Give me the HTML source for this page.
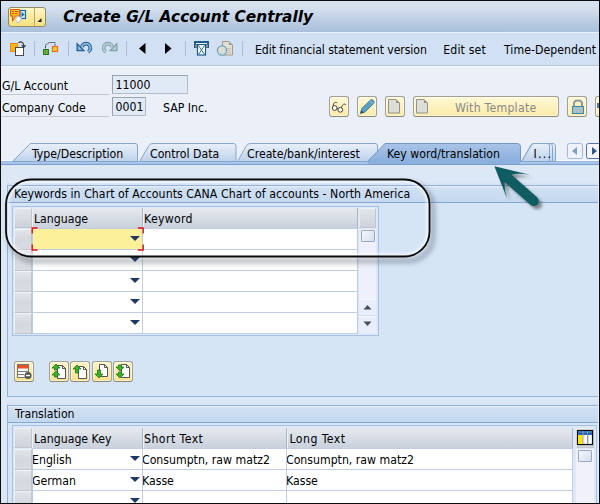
<!DOCTYPE html>
<html><head><meta charset="utf-8">
<title>Create G/L Account Centrally</title>
<style>
*{box-sizing:border-box;margin:0;padding:0}
html,body{width:600px;height:504px;overflow:hidden;background:#ebf0f8}
body{position:relative;font-family:"DejaVu Sans Condensed","DejaVu Sans","Liberation Sans",sans-serif;font-size:12.2px;font-stretch:condensed;color:#000}
.abs{position:absolute}
.t{position:absolute;white-space:nowrap;line-height:14px}
#titlebar{left:0;top:0;width:600px;height:32px;background:linear-gradient(#dae4f1 0,#d2deed 30%,#bccde3 65%,#a9c0dc 100%)}
#title{left:63.300px;top:5.500px;font:italic bold 15.400px "DejaVu Sans","Liberation Sans",sans-serif;font-stretch:normal;line-height:22px}
#toolbar{left:0;top:32px;width:600px;height:34px;background:#d1e1f3;border-top:1px solid #e9f0f9;border-bottom:1px solid #b4c4d8}
.sep{position:absolute;top:41px;width:1px;height:15px;background:#a9bdd6}
.lbl{position:absolute;left:2px;width:107px;height:18px;border-bottom:1px solid #c3c8d0;line-height:18px;white-space:nowrap}
.inp{position:absolute;height:19px;background:#dfeaf6;border:1px solid #9aa3ae;border-right-color:#b4bbc4;border-bottom-color:#b4bbc4;padding-left:2.500px;line-height:18px}
.ybtn{position:absolute;top:96px;width:20px;height:21px;border:1px solid #a29f94;border-bottom-color:#8b8879;border-radius:3px;background:linear-gradient(#fef8d6,#fbeba8);box-shadow:inset 0 0 0 1px rgba(255,255,255,.5)}
.ybtn svg{position:absolute;left:0;top:0}
.yb2{background:linear-gradient(#fdf4c4,#f8e18c)}
#content{left:1px;top:165px;width:598px;height:339px;background:#dce8f6}
.gb{position:absolute;left:7px;width:592px;border:1px solid #93b2d9;border-right:0;background:#d6e5f6}
.gbh{position:absolute;left:0;top:0;width:100%;height:17px;background:linear-gradient(#eaf1fa 0,#d0e0f2 12%,#c4d8ef 100%);border-bottom:1px solid #84a7d3}
.tbl{position:absolute;border:1px solid #a9c1e0;background:#dce8f7}
.grid{position:absolute;background:#bfcde0}
.th{position:absolute;height:20px;background:linear-gradient(#e6eaef 0,#d8dde5 50%,#c9d1dc 100%);border-right:1px solid #aab7c7;border-left:1px solid #eef1f5;line-height:23px;padding-left:1px;white-space:nowrap}
.selh{position:absolute;background:linear-gradient(#e3e6eb,#cdd2d9);border:1px solid #c1c7d0;border-top-color:#eceff3;border-left-color:#e6e9ee}
.sel{position:absolute;background:linear-gradient(#e1e4e9 0,#d5d9df 50%,#d9dde2 100%);border:1px solid #c0c6cf;border-top-color:#f1f3f6;border-left-color:#e9ecf0}
.cell{position:absolute;height:20px;background:#fff;line-height:22px;text-indent:-1px;white-space:nowrap;overflow:hidden}
.dd{position:absolute;width:0;height:0;margin-left:-.5px;border-left:5px solid transparent;border-right:5px solid transparent;border-top:5.500px solid #1f3868}
</style></head><body>
<!-- title bar -->
<div id="titlebar" class="abs"></div>
<div class="abs" style="left:8px;top:7px;width:38px;height:20px;border:1px solid #8f8a6e;border-radius:3px;background:linear-gradient(#fef6c6,#f6e17f)"></div>
<div class="abs" style="left:34px;top:8px;width:1px;height:18px;background:#b5a873"></div>
<svg class="abs" style="left:8px;top:7px" width="38" height="20" viewBox="0 0 38 20">
 <rect x="12" y="3.500" width="5.500" height="8" fill="#d9ebf7" stroke="#1a6aa8" stroke-width="1.200"/>
 <path d="M13.500 5l3.200 2.500-3.200 2.500z" fill="#1a6aa8"/>
 <path d="M2.500 2.500h9v6.500h-4l-3 5v-5h-2z" fill="#fdbe18" stroke="#e0601a" stroke-width="1.100" stroke-linejoin="round"/>
 <path d="M4 4.500h2M7 4.500h3M4 6.500h2M7 6.500h2" stroke="#d9541a" stroke-width="1"/>
 <path d="M7.500 12l3-3 3 2.500-2.500 4h-2z" fill="#fff" stroke="#a8a8a8" stroke-width=".7"/>
 <path d="M33.500 11v4h-4z" fill="#222"/>
</svg>
<div id="title" class="t">Create G/L Account Centrally</div>

<!-- toolbar -->
<div id="toolbar" class="abs"></div>
<div class="sep" style="left:34px"></div><div class="sep" style="left:68px"></div><div class="sep" style="left:126px"></div><div class="sep" style="left:185px"></div><div class="sep" style="left:242px"></div>
<svg class="abs" style="left:0;top:33px" width="250" height="33" viewBox="0 0 250 33">
 <!-- icon1: other object -->
 <rect x="10.500" y="10.500" width="7" height="8" fill="#fdb31a" stroke="#f08c12"/>
 <rect x="15.500" y="14.500" width="8" height="8" fill="#fff" stroke="#4a4a4a"/>
 <path d="M18.500 9.800c2.500-1.800 5.200-.8 5.200 3" fill="none" stroke="#333" stroke-width="1.100"/><path d="M21.200 12.300h5l-2.500 3z" fill="#333"/>
 <!-- icon2 -->
 <rect x="43.500" y="16.500" width="5" height="5" fill="#62ad3e" stroke="#2f7a1d"/>
 <rect x="52.500" y="13.500" width="5" height="5" fill="#fdc83c" stroke="#e8701a" stroke-width="1.200"/>
 <path d="M45.500 15.500v-3.500l4-2.500h5.500v3" fill="none" stroke="#555" stroke-width="1" stroke-dasharray="2.500 .5"/>
 <!-- undo -->
 <path d="M81.750 13.900A4.400 4.400 0 1 1 88.100 18.900" fill="none" stroke="#1f5f94" stroke-width="3.800"/>
 <path d="M76.500 9.300v8.900h8.900z" fill="#1f5f94"/>
 <path d="M81.750 13.900A4.400 4.400 0 1 1 88.100 18.900" fill="none" stroke="#8fb5d8" stroke-width="1.800"/>
 <path d="M77.800 12.300v4.600h4.600z" fill="#8fb5d8"/>
 <!-- redo -->
 <path d="M112.250 13.900A4.400 4.400 0 1 0 105.900 18.900" fill="none" stroke="#7fa3ae" stroke-width="3.800"/>
 <path d="M117.500 9.300v8.900h-8.900z" fill="#7fa3ae"/>
 <path d="M112.250 13.900A4.400 4.400 0 1 0 105.900 18.900" fill="none" stroke="#b4ccd2" stroke-width="1.800"/>
 <path d="M116.200 12.300v4.600h-4.600z" fill="#b4ccd2"/>
 <!-- triangles -->
 <path d="M145.500 10v11l-6.500-5.500z" fill="#000"/>
 <path d="M165 10v11l6.500-5.500z" fill="#000"/>
 <!-- teal icon -->
 <rect x="194" y="8" width="15" height="7" fill="#1a5c8c"/>
 <rect x="196" y="10" width="11" height="1" fill="#fff"/>
 <rect x="195" y="11.500" width="2" height="3" fill="#8c8c8c"/><rect x="206" y="11.500" width="2" height="3" fill="#8c8c8c"/>
 <rect x="197.500" y="11.500" width="8" height="10.500" fill="#fff" stroke="#1a5c8c" stroke-width="1.200"/>
 <path d="M198.500 12.500l6 9M204.500 12.500l-6 9" stroke="#1a5c8c" stroke-width=".9"/>
 <!-- grey doc icon -->
 <path d="M222.500 8.500h6.500l3.500 3.500v10h-10z" fill="#deded4" stroke="#a39c8c"/>
 <path d="M229 8.500v3.500h3.500z" fill="#a39c8c"/>
 <path d="M227 15.500h4M227 17.500h4M227 19.500h4" stroke="#cdbfb6" stroke-width="1"/>
 <circle cx="222" cy="17.500" r="4.600" fill="#d9ded9" stroke="#6a9fae" stroke-width="1.200"/>
 <path d="M225 16a3.200 3.200 0 0 1-4.500 4.500" fill="none" stroke="#b9d0d4" stroke-width="1"/>
</svg>
<div class="t" style="left:255px;top:43px;letter-spacing:-.09px">Edit financial statement version</div>
<div class="t" style="left:443.200px;top:43px;letter-spacing:.15px">Edit set</div>
<div class="t" style="left:504px;top:43px;letter-spacing:.04px">Time-Dependent</div>
<div class="abs" style="left:0;top:66px;width:600px;height:1px;background:#f7fafd"></div>

<!-- header fields -->
<div class="lbl" style="top:77px">G/L Account</div>
<div class="lbl" style="top:99px">Company Code</div>
<div class="inp" style="left:112px;top:75px;width:76px">11000</div>
<div class="inp" style="left:112px;top:97px;width:34px">0001</div>
<div class="t" style="left:163px;top:101px">SAP Inc.</div>

<!-- yellow buttons -->
<div class="ybtn" style="left:329px"><svg width="18" height="19" viewBox="0 0 18 19">
 <circle cx="4.700" cy="11" r="2.400" fill="#fdfbe9" stroke="#333" stroke-width=".9"/><circle cx="10.300" cy="12.800" r="2.400" fill="#fdfbe9" stroke="#333" stroke-width=".9"/>
 <path d="M3.200 9c0-3 1.800-4.500 4-3.200M11.500 10.500c.8-3 2.600-4.200 4.500-2.800M7.100 11.500l.9.400" fill="none" stroke="#333" stroke-width=".9"/></svg></div>
<div class="ybtn" style="left:357px"><svg width="18" height="19" viewBox="0 0 18 19">
 <path d="M2.500 16.500l1.300-5 8.700-8.500c2-1.200 4.500 1.200 3.300 3.300l-8.600 8.600z" fill="#5f9fbf" stroke="#3f7f9f" stroke-width="1" stroke-linejoin="round"/><path d="M12 3.500l3.300 3.300" stroke="#8fc0d6" stroke-width="1"/><path d="M2.500 16.500l.9-3.200 2.300 2.300z" fill="#2a4a5c"/></svg></div>
<div class="ybtn" style="left:385px"><svg width="19" height="20" viewBox="0 0 19 20">
 <path d="M2.500 2.500h7.500l3.500 3.500v10h-11z" fill="#dcdfd8" stroke="#94948c"/><path d="M10 2.500v3.500h3.500z" fill="#94948c"/></svg></div>
<div class="ybtn" style="left:413px;width:146px"><svg width="19" height="20" viewBox="0 0 19 20">
 <path d="M2.500 2.500h7.500l3.500 3.500v10h-11z" fill="#dcdfd8" stroke="#94948c"/><path d="M10 2.500v3.500h3.500z" fill="#94948c"/></svg>
 <div class="t" style="left:41px;top:4px;color:#8a8a8a;letter-spacing:.25px">With Template</div></div>
<div class="ybtn" style="left:567px"><svg width="19" height="20" viewBox="0 0 19 20">
 <path d="M6 10v-3.500c0-4 8-4 8 0v3.500" fill="none" stroke="#8e9aa0" stroke-width="2"/><rect x="4.500" y="9.500" width="11" height="7" fill="#a9c0c8" stroke="#3f8aa0"/></svg></div>
<div class="ybtn" style="left:595px"><svg width="18" height="19" viewBox="0 0 18 19"><rect x="1" y="6" width="4" height="5" fill="#3f7fb0"/></svg></div>

<!-- tabs -->
<svg class="abs" style="left:0;top:138px" width="600" height="28" viewBox="0 0 600 28">
 <defs>
  <linearGradient id="ti" x1="0" y1="0" x2="0" y2="1"><stop offset="0" stop-color="#e8f0f9"/><stop offset=".45" stop-color="#d6e3f3"/><stop offset="1" stop-color="#bcd1eb"/></linearGradient>
  <linearGradient id="ta" x1="0" y1="0" x2="0" y2="1"><stop offset="0" stop-color="#a8c4e8"/><stop offset="1" stop-color="#8cafdd"/></linearGradient>
 </defs>
 <rect x="0" y="22" width="600" height="1" fill="#f8fbfe"/>
 <rect x="0" y="23" width="600" height="4" fill="#aac5e9"/>
 <rect x="0" y="23" width="600" height="1" fill="#9bb9df"/>
 <rect x="0" y="26" width="600" height="1" fill="#7a9fce"/>
 <path d="M12.500 23.500L30.500 5.500H135q2.500 0 2.500 2.500V23.500z" fill="url(#ti)" stroke="#86a5cf"/>
 <path d="M139.500 23.500L149 7.500q1.500-2 4-2H233.500q2.500 0 2.500 2.500V23.500z" fill="url(#ti)" stroke="#86a5cf"/>
 <path d="M237.500 23.500L246.500 7.500q1.500-2 4-2H375q2.500 0 2.500 2.500V23.500z" fill="url(#ti)" stroke="#86a5cf"/>
 <path d="M521.500 23.500L531 7q1-1.500 3-1.500H553q2.500 0 2.500 3V23.500z" fill="url(#ti)" stroke="#86a5cf"/>
 <path d="M524.500 23.500L531 7q1-1.500 3-1.500H550q2.500 0 2.500 3V23.500z" fill="url(#ti)" stroke="#86a5cf"/>
 <path d="M521.500 23.500L531.500 7q1-1.500 3-1.500H547q2.500 0 2.500 2.500V23.500z" fill="url(#ti)" stroke="#86a5cf"/>
 <path d="M367.500 23.500L385 5.500H517.500q3 0 3 3V23.500z" fill="url(#ta)" stroke="#7196c8"/>
 <rect x="368" y="23" width="152" height="3" fill="#8cafdd"/>
 <!-- nav buttons -->
 <rect x="567.500" y="5.500" width="15" height="15" rx="2" fill="#eef3fb" stroke="#9fb9dc"/>
 <path d="M577 9v8l-5-4z" fill="#7f9fc4"/>
 <rect x="586.500" y="5.500" width="15" height="15" rx="2" fill="#f6f4f8" stroke="#4f74a8"/>
 <path d="M592 9v8l5-4z" fill="#2f5688"/>
</svg>
<div class="t" style="left:32px;top:147px">Type/Description</div>
<div class="t" style="left:150px;top:147px">Control Data</div>
<div class="t" style="left:247px;top:147px">Create/bank/interest</div>
<div class="t" style="left:387px;top:147px">Key word/translation</div>
<div class="t" style="left:533.500px;top:147px;letter-spacing:1.300px">I...</div>

<!-- tab content -->
<div id="content" class="abs"></div>

<!-- group box 1 -->
<div class="abs" style="left:7px;top:181px;width:592px;height:4px;background:linear-gradient(#dce8f6,#d4e1f3)"></div>
<div class="gb" style="top:185px;height:212px"><div class="gbh"></div></div>
<div class="t" style="left:14px;top:187px;letter-spacing:.06px">Keywords in Chart of Accounts CANA Chart of accounts - North America</div>
<div class="tbl" style="left:12px;top:206px;width:367px;height:130px"></div>
<div class="grid" style="left:32px;top:228px;width:326px;height:106px"></div>
<div class="selh" style="left:14px;top:208px;width:18px;height:20px"></div>
<div class="th" style="left:32px;top:208px;width:111px">Language</div>
<div class="th" style="left:143px;top:208px;width:215px;padding-left:0;letter-spacing:.3px">Keyword</div>
<div class="selh" style="left:359px;top:208px;width:17px;height:20px"></div>
<div class="abs" style="left:359px;top:229px;width:17px;height:70px;background:#eef0fb"></div>
<div class="abs" style="left:361px;top:230px;width:14px;height:12px;border:1px solid #9aa9bd;border-radius:1px;background:linear-gradient(135deg,#f4f7fb,#d3dfee)"></div>
<div class="abs" style="left:359px;top:299px;width:17px;height:17px;background:#e9eefa;border-top:1px solid #f8f9fe;border-bottom:1px solid #d2dbee"></div>
<div class="abs" style="left:359px;top:316px;width:17px;height:17px;background:#e9eefa;border-top:1px solid #f8f9fe"></div>
<svg class="abs" style="left:359px;top:299px" width="17" height="34" viewBox="0 0 17 34"><path d="M4.500 10.500h8l-4-4.500z" fill="#454f5b"/><path d="M4.500 22.500h8l-4 4.500z" fill="#454f5b"/></svg>
<div class="sel" style="left:14px;top:229px;width:18px;height:21px"></div>
<div class="cell" style="left:33px;top:229px;width:109px;background:#fdf09b"></div>
<div class="cell" style="left:143px;top:229px;width:214px"></div>
<div class="dd" style="left:130px;top:236px"></div>
<div class="sel" style="left:14px;top:250px;width:18px;height:21px"></div>
<div class="cell" style="left:33px;top:250px;width:109px;background:#fff"></div>
<div class="cell" style="left:143px;top:250px;width:214px"></div>
<div class="dd" style="left:130px;top:257px"></div>
<div class="sel" style="left:14px;top:271px;width:18px;height:21px"></div>
<div class="cell" style="left:33px;top:271px;width:109px;background:#fff"></div>
<div class="cell" style="left:143px;top:271px;width:214px"></div>
<div class="dd" style="left:130px;top:278px"></div>
<div class="sel" style="left:14px;top:292px;width:18px;height:21px"></div>
<div class="cell" style="left:33px;top:292px;width:109px;background:#fff"></div>
<div class="cell" style="left:143px;top:292px;width:214px"></div>
<div class="dd" style="left:130px;top:299px"></div>
<div class="sel" style="left:14px;top:313px;width:18px;height:21px"></div>
<div class="cell" style="left:33px;top:313px;width:109px;background:#fff"></div>
<div class="cell" style="left:143px;top:313px;width:214px"></div>
<div class="dd" style="left:130px;top:320px"></div>
<svg class="abs" style="left:31px;top:227px" width="116" height="26" viewBox="0 0 116 26"><path d="M6.500 1h-5.300v5.500M1.200 17.500v5.500h5.300M106.800 1h5.400v5.500M112.200 17.500v5.500h-5.400" fill="none" stroke="#e60f1a" stroke-width="1.400"/></svg>
<!-- buttons row -->
<div class="ybtn yb2" style="left:14px;top:361px;width:20px;height:21px"><svg width="18" height="19" viewBox="0 0 18 19">
 <rect x="2.500" y="2.500" width="11" height="13" fill="#fff" stroke="#777"/><rect x="3" y="3" width="10" height="3.500" fill="#e8502a"/><path d="M3 9.500h10M3 12.500h6" stroke="#777"/><circle cx="13" cy="13.500" r="3.500" fill="#555"/><path d="M11 13.500h4" stroke="#fff" stroke-width="1.400"/></svg></div>
<div class="ybtn yb2" style="left:49px;top:361px;width:20px;height:21px"><svg width="18" height="19" viewBox="0 0 18 19">
 <path d="M7.500 3.500h5l3 3v10h-8z" fill="#fff" stroke="#555"/><path d="M12.500 3.500v3h3" fill="none" stroke="#555"/><path d="M6 2l4 4h-2.500v2h-3v-2H2z" fill="#3fae2a" stroke="#1f7a14" stroke-width=".8"/><path d="M6 9l4 4h-2.500v2h-3v-2H2z" fill="#3fae2a" stroke="#1f7a14" stroke-width=".8"/></svg></div>
<div class="ybtn yb2" style="left:70px;top:361px;width:20px;height:21px"><svg width="18" height="19" viewBox="0 0 18 19">
 <path d="M7.500 4.500h5l3 3v9h-8z" fill="#fff" stroke="#555"/><path d="M12.500 4.500v3h3" fill="none" stroke="#555"/><path d="M6 3l4 4h-2.500v4h-3v-4H2z" fill="#3fae2a" stroke="#1f7a14" stroke-width=".8"/></svg></div>
<div class="ybtn yb2" style="left:92px;top:361px;width:20px;height:21px"><svg width="18" height="19" viewBox="0 0 18 19">
 <path d="M6.500 2.500h5l3 3v9h-8z" fill="#fff" stroke="#555"/><path d="M11.500 2.500v3h3" fill="none" stroke="#555"/><path d="M6 16l4-4h-2.500v-4h-3v4H2z" fill="#3fae2a" stroke="#1f7a14" stroke-width=".8"/></svg></div>
<div class="ybtn yb2" style="left:113px;top:361px;width:20px;height:21px"><svg width="18" height="19" viewBox="0 0 18 19">
 <path d="M7.500 2.500h5l3 3v10h-8z" fill="#fff" stroke="#555"/><path d="M12.500 2.500v3h3" fill="none" stroke="#555"/><path d="M6 9l4-4h-2.500v-2h-3v2H2z" fill="#3fae2a" stroke="#1f7a14" stroke-width=".8"/><path d="M6 16l4-4h-2.500v-2h-3v2H2z" fill="#3fae2a" stroke="#1f7a14" stroke-width=".8"/></svg></div>

<!-- group box 2 -->
<div class="abs" style="left:7px;top:401px;width:592px;height:4px;background:linear-gradient(#dce8f6,#d4e1f3)"></div>
<div class="gb" style="top:405px;height:120px"><div class="gbh"></div></div>
<div class="t" style="left:15px;top:407px">Translation</div>
<div class="tbl" style="left:12px;top:425px;width:585px;height:100px"></div>
<div class="grid" style="left:32px;top:448px;width:541px;height:60px"></div>
<div class="selh" style="left:14px;top:428px;width:18px;height:20px"></div>
<div class="th" style="left:32px;top:428px;width:111px">Language Key</div>
<div class="th" style="left:143px;top:428px;width:144px;padding-left:0;letter-spacing:.45px">Short Text</div>
<div class="th" style="left:287px;top:428px;width:286px;padding-left:1.500px;letter-spacing:.45px">Long Text</div>
<div class="selh" style="left:576px;top:428px;width:18px;height:20px"></div>
<div class="abs" style="left:576px;top:449px;width:18px;height:60px;background:#f0f1fb"></div>
<svg class="abs" style="left:576px;top:428px" width="20" height="20" viewBox="0 0 20 20"><rect x="1.500" y="2.500" width="15" height="14" fill="#fff" stroke="#0a0a0a" stroke-width="1.200"/><rect x="2" y="3" width="14" height="4" fill="#3c7bcb"/><rect x="2" y="5" width="14" height="2" fill="#2a62b0"/><rect x="2" y="7" width="4.500" height="9" fill="#ffe600"/><path d="M7 3v13M11.500 3v13" stroke="#8a95a8" stroke-width="1"/><path d="M8 7v9M12.500 7v9" stroke="#d5dae3" stroke-width="1"/></svg>
<div class="abs" style="left:578px;top:450px;width:14px;height:12px;border:1px solid #9aa9bd;border-radius:1px;background:linear-gradient(135deg,#f4f7fb,#d3dfee)"></div>
<div class="sel" style="left:14px;top:449px;width:18px;height:21px"></div>
<div class="cell" style="left:33px;top:449px;width:109px">English</div>
<div class="cell" style="left:143px;top:449px;width:143px">Consumptn, raw matz2</div>
<div class="cell" style="left:287px;top:449px;width:285px">Consumptn, raw matz2</div>
<div class="dd" style="left:130px;top:456px"></div>
<div class="sel" style="left:14px;top:470px;width:18px;height:21px"></div>
<div class="cell" style="left:33px;top:470px;width:109px">German</div>
<div class="cell" style="left:143px;top:470px;width:143px">Kasse</div>
<div class="cell" style="left:287px;top:470px;width:285px">Kasse</div>
<div class="dd" style="left:130px;top:477px"></div>
<div class="sel" style="left:14px;top:491px;width:18px;height:21px"></div>
<div class="cell" style="left:33px;top:491px;width:109px"></div>
<div class="cell" style="left:143px;top:491px;width:143px"></div>
<div class="cell" style="left:287px;top:491px;width:285px"></div>
<div class="dd" style="left:130px;top:498px"></div>

<!-- annotation -->
<svg class="abs" style="left:0;top:160px" width="600" height="120" viewBox="0 0 600 120">
 <defs><filter id="sh" x="-10%" y="-20%" width="120%" height="150%"><feGaussianBlur stdDeviation="1.600"/></filter>
 <filter id="sh2" x="-10%" y="-30%" width="120%" height="160%"><feGaussianBlur stdDeviation="2"/></filter>
 <clipPath id="out"><path clip-rule="evenodd" d="M0 0H600V120H0ZM31 19.500H404.500A25 25 0 0 1 429.500 44.500V71.500A25 25 0 0 1 404.500 96.500H31A25 25 0 0 1 6 71.500V44.500A25 25 0 0 1 31 19.500Z"/></clipPath>
 <clipPath id="in"><path d="M31 19.500H404.500A25 25 0 0 1 429.500 44.500V71.500A25 25 0 0 1 404.500 96.500H31A25 25 0 0 1 6 71.500V44.500A25 25 0 0 1 31 19.500Z"/></clipPath>
 <filter id="gl" x="-10%" y="-20%" width="120%" height="150%"><feGaussianBlur stdDeviation="1.200"/></filter></defs>
 <g clip-path="url(#out)"><rect x="9.500" y="24" width="423.500" height="77" rx="25" ry="25" fill="none" stroke="#3f4650" stroke-opacity=".3" stroke-width="6" filter="url(#sh2)"/></g>
 <g clip-path="url(#in)"><rect x="7.500" y="21" width="420.500" height="74" rx="23" ry="23" fill="none" stroke="#fff" stroke-opacity=".6" stroke-width="3.500" filter="url(#gl)"/></g>
 <rect x="6" y="19.500" width="423.500" height="77" rx="25" ry="25" fill="none" stroke="#0a0a0a" stroke-width="1.800"/>
 <g transform="translate(498,10) rotate(41.400)" filter="url(#sh)" opacity=".5"><path d="M-.5-.1L31.500-17Q21-10.500 18-5H52A5 5 0 0 1 52 5H18Q21 10 30 15.500Z" fill="#222"/></g>
 <g transform="translate(494.700,6.700) rotate(41.400)"><path d="M-.5-.1L31.500-17Q21-10.500 18-5H52A5 5 0 0 1 52 5H18Q21 10 30 15.500Z" fill="#0f5c62"/></g>
</svg>
<div class="abs" style="left:598px;top:165px;width:1px;height:338px;background:#e6eef9"></div>
<!-- outer frame -->
<div class="abs" style="left:0;top:0;width:600px;height:504px;border:1px solid #0c0c0c"></div>
</body></html>
